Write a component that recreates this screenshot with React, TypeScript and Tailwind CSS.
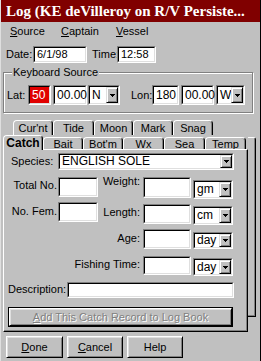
import React from 'react'

type BoxProps = {
  className?: string
  inner?: string
  children?: React.ReactNode
}

// sunken edit field, win95 style
function Sunken({ className = '', inner = 'bg-white', children }: BoxProps) {
  return (
    <div className={`border border-t-[#808080] border-l-[#808080] border-r-white border-b-white ${className}`}>
      <div className={`flex h-full w-full items-center border border-t-black border-l-black border-r-[#dfdfdf] border-b-[#dfdfdf] ${inner}`}>
        {children}
      </div>
    </div>
  )
}

const Arrow = () => (
  <svg width="5" height="3" viewBox="0 0 5 3" shapeRendering="crispEdges">
    <path d="M0 0h5L2.5 3z" fill="black" />
  </svg>
)

function Select({ value, className = '' }: { value: string; className?: string }) {
  return (
    <Sunken className={className}>
      <span className="flex-1 overflow-hidden whitespace-nowrap pl-[2px]">{value}</span>
      <div className="flex h-full w-[12px] items-center justify-center border border-t-[#dfdfdf] border-l-[#dfdfdf] border-r-black border-b-black bg-[#c0c0c0] shadow-[inset_1px_1px_0_white,inset_-1px_-1px_0_#808080]">
        <Arrow />
      </div>
    </Sunken>
  )
}

function Button({ className = '', children }: BoxProps) {
  return (
    <button
      type="button"
      className={`flex items-center justify-center border border-t-white border-l-white border-r-black border-b-black bg-[#c0c0c0] shadow-[inset_1px_1px_0_#dfdfdf,inset_-1px_-1px_0_#808080] ${className}`}
    >
      {children}
    </button>
  )
}

function Tab({ label, className = '' }: { label: string; className?: string }) {
  return (
    <div
      className={`flex justify-center rounded-t-[4px] border border-b-0 border-t-white border-l-white border-r-black bg-[#c0c0c0] shadow-[inset_-1px_0_0_#808080] leading-[12px] ${className}`}
    >
      {label}
    </div>
  )
}

const backTabs = [
  { label: "Cur'nt", w: 'w-[40px]' },
  { label: 'Tide', w: 'w-[41px]' },
  { label: 'Moon', w: 'w-[39px]' },
  { label: 'Mark', w: 'w-[40px]' },
  { label: 'Snag', w: 'w-[40px]' },
]

const frontTabs = [
  { label: 'Bait', w: 'w-[40px]' },
  { label: "Bot'm", w: 'w-[40px]' },
  { label: 'Wx', w: 'w-[41px]' },
  { label: 'Sea', w: 'w-[41px]' },
  { label: 'Temp', w: 'w-[41px]' },
]

export default function App() {
  return (
    <div className="h-[361px] w-[261px] overflow-hidden border-l border-r border-l-[#dfdfdf] border-r-black bg-[#c0c0c0] font-['Liberation_Sans',Arial,sans-serif] text-[11px] leading-[13px] text-black">
      {/* Title bar */}
      <div className="flex h-[22px] items-center overflow-hidden whitespace-nowrap bg-[#800000] pl-[5px] font-['Liberation_Serif','Times_New_Roman',serif] text-[15px] font-bold leading-none text-white">
        Log (KE deVilleroy on R/V Persiste...
      </div>

      {/* Menu */}
      <div className="flex h-[18px] items-center pl-[9px]">
        <span className="w-[51px]">
          <u>S</u>ource
        </span>
        <span className="w-[55px]">
          <u>C</u>aptain
        </span>
        <span>
          <u>V</u>essel
        </span>
      </div>

      {/* Date / time */}
      <div className="mt-[6px] flex h-[17px] items-center pl-[5px]">
        <span className="w-[27px]">Date:</span>
        <Sunken className="h-[17px] w-[54px]">
          <span className="pl-[2px]">6/1/98</span>
        </Sunken>
        <span className="ml-[5px] w-[25px]">Time:</span>
        <Sunken className="h-[17px] w-[39px]">
          <span className="pl-[2px]">12:58</span>
        </Sunken>
      </div>

      {/* Keyboard Source group */}
      <div className="relative ml-[2px] mt-[9px] h-[41px] w-[250px] border border-[#808080] shadow-[inset_1px_1px_0_white,1px_1px_0_white]">
        <span className="absolute -top-[7px] left-[8px] bg-[#c0c0c0] px-[1px]">Keyboard Source</span>
        <div className="mt-[12px] flex h-[20px] items-center pl-[3px]">
          <span className="w-[21px]">Lat:</span>
          <Sunken className="h-[20px] w-[23px]" inner="bg-[#e00000] text-white">
            <span className="pl-[2px] text-[12px]">50</span>
          </Sunken>
          <Sunken className="ml-[2px] h-[20px] w-[34px]">
            <span className="pl-[2px] text-[12px]">00.00</span>
          </Sunken>
          <Select value="N" className="ml-[1px] h-[20px] w-[32px] text-[12px]" />
          <span className="ml-[11px] w-[21px]">Lon:</span>
          <Sunken className="h-[20px] w-[27px]">
            <span className="pl-[2px] text-[12px]">180</span>
          </Sunken>
          <Sunken className="ml-[2px] h-[20px] w-[33px]">
            <span className="pl-[2px] text-[12px]">00.00</span>
          </Sunken>
          <Select value="W" className="ml-[2px] h-[20px] w-[29px] text-[12px]" />
        </div>
      </div>

      {/* Tab control */}
      <div className="ml-[2px] mt-[7px]">
        <div className="flex h-[15px] pl-[10px]">
          {backTabs.map((t) => (
            <Tab key={t.label} label={t.label} className={`h-[15px] pt-[1px] ${t.w}`} />
          ))}
        </div>
        <div className="flex items-start">
          <div className="flex w-[245px] flex-col">
            <div className="flex h-[14px] items-end">
              <Tab label="Catch" className="relative z-10 -mb-[1px] h-[15px] w-[40px] pt-[1px] text-[12px] font-bold" />
              {frontTabs.map((t) => (
                <Tab key={t.label} label={t.label} className={`h-[12px] ${t.w}`} />
              ))}
            </div>

            {/* Catch page */}
            <div className="h-[183px] w-[245px] border border-t-white border-l-white border-r-black border-b-black shadow-[inset_-1px_-1px_0_#808080]">
              <div className="mt-[3px] flex h-[17px] items-center">
                <span className="w-[54px] pl-[7px]">Species:</span>
                <Select value="ENGLISH SOLE" className="h-[17px] w-[176px] text-[12px]" />
              </div>

              <div className="mt-[7px] flex items-start">
                <span className="mt-[2px] w-[54px] pr-[1px] text-right">Total No.</span>
                <Sunken className="h-[20px] w-[40px]" />
                <span className="-mt-[2px] w-[45px] pr-[3px] text-right">Weight:</span>
                <Sunken className="h-[21px] w-[48px]" />
                <Select value="gm" className="ml-[2px] mt-[3px] h-[19px] w-[40px] text-[12px]" />
              </div>

              <div className="mt-[3px] flex items-start">
                <span className="mt-[3px] w-[54px] pr-[1px] text-right">No. Fem.</span>
                <Sunken className="h-[20px] w-[40px]" />
                <span className="mt-[4px] w-[45px] pr-[3px] text-right">Length:</span>
                <Sunken className="mt-[2px] h-[20px] w-[48px]" />
                <Select value="cm" className="ml-[2px] mt-[4px] h-[19px] w-[40px] text-[12px]" />
              </div>

              <div className="mt-[4px] flex items-start">
                <span className="mt-[3px] w-[139px] pr-[3px] text-right">Age:</span>
                <Sunken className="h-[20px] w-[48px]" />
                <Select value="day" className="ml-[2px] mt-[3px] h-[17px] w-[40px] text-[12px]" />
              </div>

              <div className="mt-[7px] flex items-start">
                <span className="mt-[2px] w-[139px] pr-[3px] text-right">Fishing Time:</span>
                <Sunken className="h-[19px] w-[48px]" />
                <Select value="day" className="ml-[2px] mt-[2px] h-[18px] w-[40px] text-[12px]" />
              </div>

              <div className="mt-[6px] flex items-start">
                <span className="mt-[1px] w-[63px] pl-[4px]">Description:</span>
                <Sunken className="h-[16px] w-[167px]" />
              </div>

              <div className="ml-[4px] mt-[9px] h-[20px] w-[225px] border border-black">
                <Button className="h-full w-full text-[#808080] [text-shadow:1px_1px_0_white]">
                  <span>
                    <u>A</u>dd This Catch Record to Log Book
                  </span>
                </Button>
              </div>
            </div>
          </div>

          {/* edge of the pages behind */}
          <div className="mt-[2px] h-[180px] w-[8px] rounded-tr-[3px] border border-l-0 border-t-white border-r-black border-b-black shadow-[inset_-1px_-1px_0_#808080]" />
        </div>
      </div>

      {/* Bottom buttons */}
      <div className="mt-[4px] flex pl-[5px]">
        <Button className="h-[22px] w-[57px]">
          <span>
            <u>D</u>one
          </span>
        </Button>
        <Button className="ml-[4px] h-[22px] w-[56px]">
          <span>
            <u>C</u>ancel
          </span>
        </Button>
        <Button className="ml-[4px] h-[22px] w-[56px]">Help</Button>
      </div>
    </div>
  )
}
